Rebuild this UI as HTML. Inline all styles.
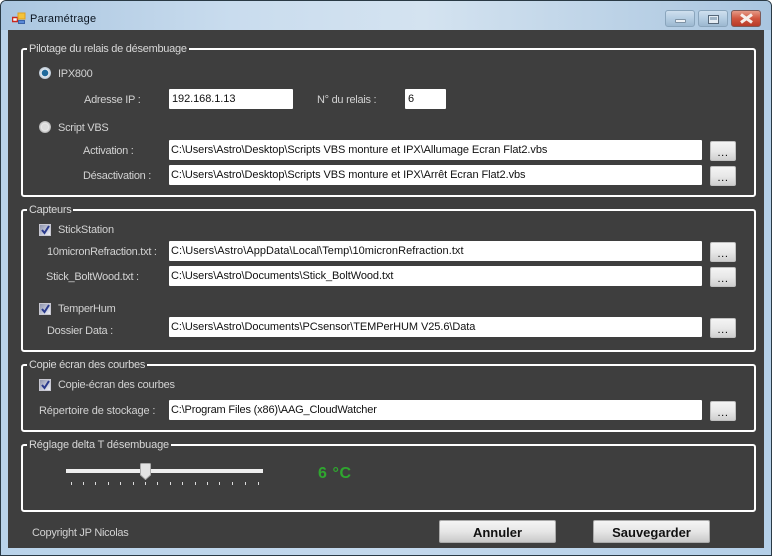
<!DOCTYPE html>
<html><head><meta charset="utf-8"><style>
html,body{margin:0;padding:0;background:#fff}
#w{position:relative;width:774px;height:559px;overflow:hidden;background:#fff;font:11px/14px "Liberation Sans",sans-serif;letter-spacing:-.27px;color:#d2d2d2}
#w div{position:absolute;white-space:nowrap;box-sizing:border-box}
.fr{left:0;top:0;width:772px;height:556px;background:linear-gradient(90deg,#b9d3ea,#c3d8ec 50%,#b4cfe8);border:1px solid #2a3a45;border-radius:6px 6px 0 0}
.tb{left:1px;top:1px;width:770px;height:29px;background:linear-gradient(90deg,#aac6e0,#c9dcee 30%,#d4e3f0 55%,#a9c5df);border-radius:5px 5px 0 0}
.pn{left:8px;top:30px;width:756px;height:518px;background:#3e3e3e}
.g{border:2px solid #fff;border-radius:3px;left:21px;width:734.5px}
.lg{background:#3e3e3e;padding:0 2px;left:27px;color:#d8d8d8}
.t{background:#fff;color:#111;border-radius:1px;padding:3px 0 0 2px;height:20px;letter-spacing:-.07px}
.b{left:710px;width:26px;height:20px;border-radius:2px;background:linear-gradient(#f4f4f4,#e8e8e8 50%,#cfcfcf);border:1px solid #c0c0c0;color:#000;text-align:center;line-height:23px;font-size:11px;letter-spacing:.6px}
.cb{width:12px;height:12px;left:39px;background:linear-gradient(135deg,#8d93ad,#eef0f8);border:1px solid #c8c8d2}
.r{width:12px;height:12px;left:39px;border-radius:50%}
.btn{top:520px;width:117px;height:23px;background:linear-gradient(#f5f5f5,#e6e6e6 50%,#c9c9c9);border:1px solid #aaa;border-radius:2px;text-align:center;color:#111;font-weight:bold;font-size:13px;line-height:23px;letter-spacing:0}
.wb{top:10px;height:17px;border:1px solid #8aa5bc;border-radius:3px}
.tk{top:482px;width:1px;height:3px;background:#ddd}
</style></head><body><div id="w">
<div class="fr"></div><div class="tb"></div>
<svg style="position:absolute;left:12px;top:12px" width="14" height="13"><rect x=".5" y="5.500" width="5" height="4" fill="#fff" stroke="#c8281f" stroke-width="1.500"/><rect x="6" y="1" width="7" height="6" fill="#f5c33a" stroke="#e0a020"/><rect x="6.500" y="8.500" width="6" height="3" fill="#5a8ad8" stroke="#3a62a8"/></svg>
<div style="left:30px;top:12px;color:#0a1420;letter-spacing:.25px">Paramétrage</div>
<div class="wb" style="left:665px;width:30px;background:linear-gradient(#cfdfee,#b5cde2 50%,#9cb8d0)"></div>
<div style="left:675px;top:19px;width:11px;height:4px;background:#eef2f6;border:1px solid #7f93a5;border-radius:1px"></div>
<div class="wb" style="left:698px;width:30px;background:linear-gradient(#cfdfee,#b5cde2 50%,#9cb8d0)"></div>
<div style="left:708px;top:15px;width:11px;height:9px;border:1px solid #56687a;background:#e4ecf3"></div>
<div style="left:710px;top:17px;width:7px;height:3px;background:#9fb4c6"></div>
<div class="wb" style="left:731px;width:30px;background:linear-gradient(#e59a86,#d0563f 50%,#b83a28);border-color:#7d5a58"></div>
<svg style="position:absolute;left:739px;top:13px" width="15" height="11"><path d="M2 1.500 L13 9.500 M13 1.500 L2 9.500" stroke="#f6eeea" stroke-width="3"/></svg>
<div class="pn"></div>

<div class="g" style="top:48px;height:149px"></div>
<div class="g" style="top:209px;height:143px"></div>
<div class="g" style="top:364px;height:68px"></div>
<div class="g" style="top:444px;height:68px"></div>
<div class="lg" style="top:42px">Pilotage du relais de désembuage</div>
<div class="lg" style="top:203px">Capteurs</div>
<div class="lg" style="top:358px">Copie écran des courbes</div>
<div class="lg" style="top:438px;letter-spacing:-.15px">Réglage delta T désembuage</div>

<div class="r" style="top:67px;background:radial-gradient(circle,#1f6a9c 0 3px,#e6edf4 3.500px,#b8c4d0 6px)"></div>
<div style="left:58px;top:67px">IPX800</div>
<div style="left:84px;top:93px">Adresse IP :</div>
<div class="t" style="left:169px;top:89px;width:124px;padding-left:3px">192.168.1.13</div>
<div style="left:317px;top:93px">N° du relais :</div>
<div class="t" style="left:405px;top:89px;width:41px;padding-left:3px">6</div>
<div class="r" style="top:121px;background:radial-gradient(circle,#dcdcdc 0 3px,#ececec 3.500px,#b0b0b0 6px)"></div>
<div style="left:58px;top:121px">Script VBS</div>
<div style="left:83px;top:144px">Activation :</div>
<div class="t" style="left:169px;top:140px;width:533px">C:\Users\Astro\Desktop\Scripts VBS monture et IPX\Allumage Ecran Flat2.vbs</div>
<div class="b" style="top:141px">...</div>
<div style="left:83px;top:169px">Désactivation :</div>
<div class="t" style="left:169px;top:165px;width:533px">C:\Users\Astro\Desktop\Scripts VBS monture et IPX\Arrêt Ecran Flat2.vbs</div>
<div class="b" style="top:166px">...</div>

<div class="cb" style="top:224px"></div>
<svg style="position:absolute;left:41px;top:225px" width="9" height="10"><path d="M1 5 L3.500 8 L8 1" fill="none" stroke="#2a3a8c" stroke-width="2"/></svg>
<div style="left:58px;top:223px;letter-spacing:-.18px">StickStation</div>
<div style="left:47px;top:245px">10micronRefraction.txt :</div>
<div class="t" style="left:169px;top:241px;width:533px;letter-spacing:.05px">C:\Users\Astro\AppData\Local\Temp\10micronRefraction.txt</div>
<div class="b" style="top:242px">...</div>
<div style="left:46px;top:270px">Stick_BoltWood.txt :</div>
<div class="t" style="left:169px;top:266px;width:533px">C:\Users\Astro\Documents\Stick_BoltWood.txt</div>
<div class="b" style="top:267px">...</div>
<div class="cb" style="top:303px"></div>
<svg style="position:absolute;left:41px;top:304px" width="9" height="10"><path d="M1 5 L3.500 8 L8 1" fill="none" stroke="#2a3a8c" stroke-width="2"/></svg>
<div style="left:58px;top:302px">TemperHum</div>
<div style="left:47px;top:324px">Dossier Data :</div>
<div class="t" style="left:169px;top:317px;width:533px">C:\Users\Astro\Documents\PCsensor\TEMPerHUM V25.6\Data</div>
<div class="b" style="top:318px">...</div>

<div class="cb" style="top:379px"></div>
<svg style="position:absolute;left:41px;top:380px" width="9" height="10"><path d="M1 5 L3.500 8 L8 1" fill="none" stroke="#2a3a8c" stroke-width="2"/></svg>
<div style="left:58px;top:378px">Copie-écran des courbes</div>
<div style="left:39px;top:404px;letter-spacing:-.15px">Répertoire de stockage :</div>
<div class="t" style="left:169px;top:400px;width:533px;letter-spacing:-.17px">C:\Program Files (x86)\AAG_CloudWatcher</div>
<div class="b" style="top:401px">...</div>

<div style="left:66px;top:469px;width:197px;height:4px;background:#eee"></div>
<svg style="position:absolute;left:140px;top:463px" width="11" height="17"><path d="M.5 1.500 Q.5 .5 1.500 .5 H9.500 Q10.500 .5 10.500 1.500 V12 L5.500 16.500 L.5 12 Z" fill="#e4e4e4" stroke="#aaa"/></svg>
<div class="tk" style="left:71px"></div><div class="tk" style="left:83px"></div><div class="tk" style="left:95px"></div><div class="tk" style="left:108px"></div><div class="tk" style="left:120px"></div><div class="tk" style="left:133px"></div><div class="tk" style="left:145px"></div><div class="tk" style="left:157px"></div><div class="tk" style="left:170px"></div><div class="tk" style="left:182px"></div><div class="tk" style="left:195px"></div><div class="tk" style="left:207px"></div><div class="tk" style="left:219px"></div><div class="tk" style="left:232px"></div><div class="tk" style="left:245px"></div><div class="tk" style="left:258px"></div>
<div style="left:318px;top:466px;color:#2fa62f;font-weight:bold;font-size:16px;line-height:16px;letter-spacing:.6px">6 °C</div>

<div style="left:32px;top:526px">Copyright JP Nicolas</div>
<div class="btn" style="left:439px">Annuler</div>
<div class="btn" style="left:593px">Sauvegarder</div>
</div></body></html>
